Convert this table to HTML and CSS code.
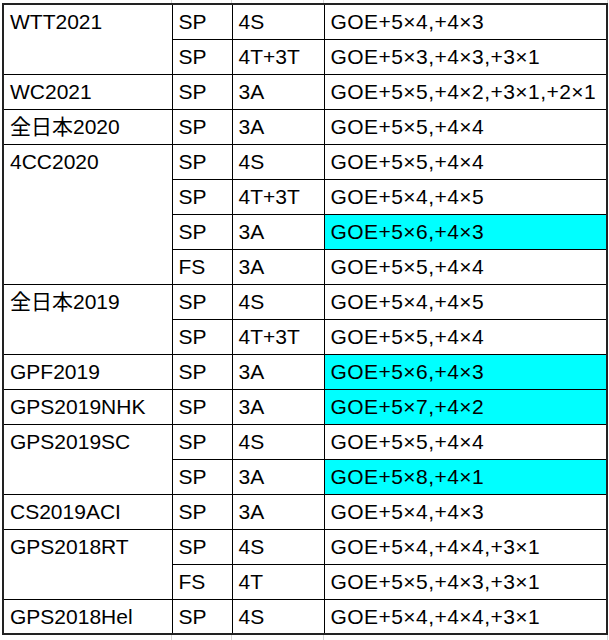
FILE: index.html
```html
<!DOCTYPE html>
<html lang="ja">
<head>
<meta charset="utf-8">
<link rel="stylesheet" href="styles.css">
</head>
<body>
<div class="sheet">
<table class="scores">
<colgroup><col class="c1"><col class="c2"><col class="c3"><col class="c4"></colgroup>
<tbody>
<tr><td rowspan="2">WTT2021</td><td>SP</td><td>4S</td><td class="goe">GOE+5×4,+4×3</td></tr>
<tr><td>SP</td><td>4T+3T</td><td class="goe">GOE+5×3,+4×3,+3×1</td></tr>
<tr><td>WC2021</td><td>SP</td><td>3A</td><td class="goe">GOE+5×5,+4×2,+3×1,+2×1</td></tr>
<tr><td>全日本2020</td><td>SP</td><td>3A</td><td class="goe">GOE+5×5,+4×4</td></tr>
<tr><td rowspan="4">4CC2020</td><td>SP</td><td>4S</td><td class="goe">GOE+5×5,+4×4</td></tr>
<tr><td>SP</td><td>4T+3T</td><td class="goe">GOE+5×4,+4×5</td></tr>
<tr><td>SP</td><td>3A</td><td class="goe hl">GOE+5×6,+4×3</td></tr>
<tr><td>FS</td><td>3A</td><td class="goe">GOE+5×5,+4×4</td></tr>
<tr><td rowspan="2">全日本2019</td><td>SP</td><td>4S</td><td class="goe">GOE+5×4,+4×5</td></tr>
<tr><td>SP</td><td>4T+3T</td><td class="goe">GOE+5×5,+4×4</td></tr>
<tr><td>GPF2019</td><td>SP</td><td>3A</td><td class="goe hl">GOE+5×6,+4×3</td></tr>
<tr><td>GPS2019NHK</td><td>SP</td><td>3A</td><td class="goe hl">GOE+5×7,+4×2</td></tr>
<tr><td rowspan="2">GPS2019SC</td><td>SP</td><td>4S</td><td class="goe">GOE+5×5,+4×4</td></tr>
<tr><td>SP</td><td>3A</td><td class="goe hl">GOE+5×8,+4×1</td></tr>
<tr><td>CS2019ACI</td><td>SP</td><td>3A</td><td class="goe">GOE+5×4,+4×3</td></tr>
<tr><td rowspan="2">GPS2018RT</td><td>SP</td><td>4S</td><td class="goe">GOE+5×4,+4×4,+3×1</td></tr>
<tr><td>FS</td><td>4T</td><td class="goe">GOE+5×5,+4×3,+3×1</td></tr>
<tr><td>GPS2018Hel</td><td>SP</td><td>4S</td><td class="goe">GOE+5×4,+4×4,+3×1</td></tr>
</tbody>
</table>
</div>
</body>
</html>
```
FILE: styles.css
```css
html, body {
  margin: 0;
  padding: 0;
  background: #fff;
}
.sheet {
  padding: 3px 0 0 2px;
  width: 609px;
  height: 640px;
  box-sizing: border-box;
  overflow: hidden;
  background-color: #fff;
  background-image:
    linear-gradient(to right, transparent 171px, #d6d6d6 171px, #d6d6d6 172px, transparent 172px),
    linear-gradient(to right, transparent 231px, #d6d6d6 231px, #d6d6d6 232px, transparent 232px),
    linear-gradient(to right, transparent 323px, #d6d6d6 323px, #d6d6d6 324px, transparent 324px),
    linear-gradient(to right, transparent 607px, #d6d6d6 607px, #d6d6d6 608px, transparent 608px);
}
.scores {
  border-collapse: collapse;
  table-layout: fixed;
  width: 604px;
  border: 2px solid #222;
  background: #fff;
  font-family: "Liberation Sans", Arial, "Noto Sans CJK JP", sans-serif;
  font-size: 21px;
  color: #000;
}
.c1 { width: 169px; }
.c2 { width: 60px; }
.c3 { width: 92px; }
.c4 { width: 283px; }
.scores tr {
  height: 35px;
}
.scores td {
  border: 1px solid #000;
  padding: 5px 6px 0;
  line-height: 24px;
  vertical-align: top;
  white-space: nowrap;
  overflow: hidden;
}
.scores td.goe {
  letter-spacing: 0.45px;
}
.scores td.hl {
  background: #00ffff;
}
```
